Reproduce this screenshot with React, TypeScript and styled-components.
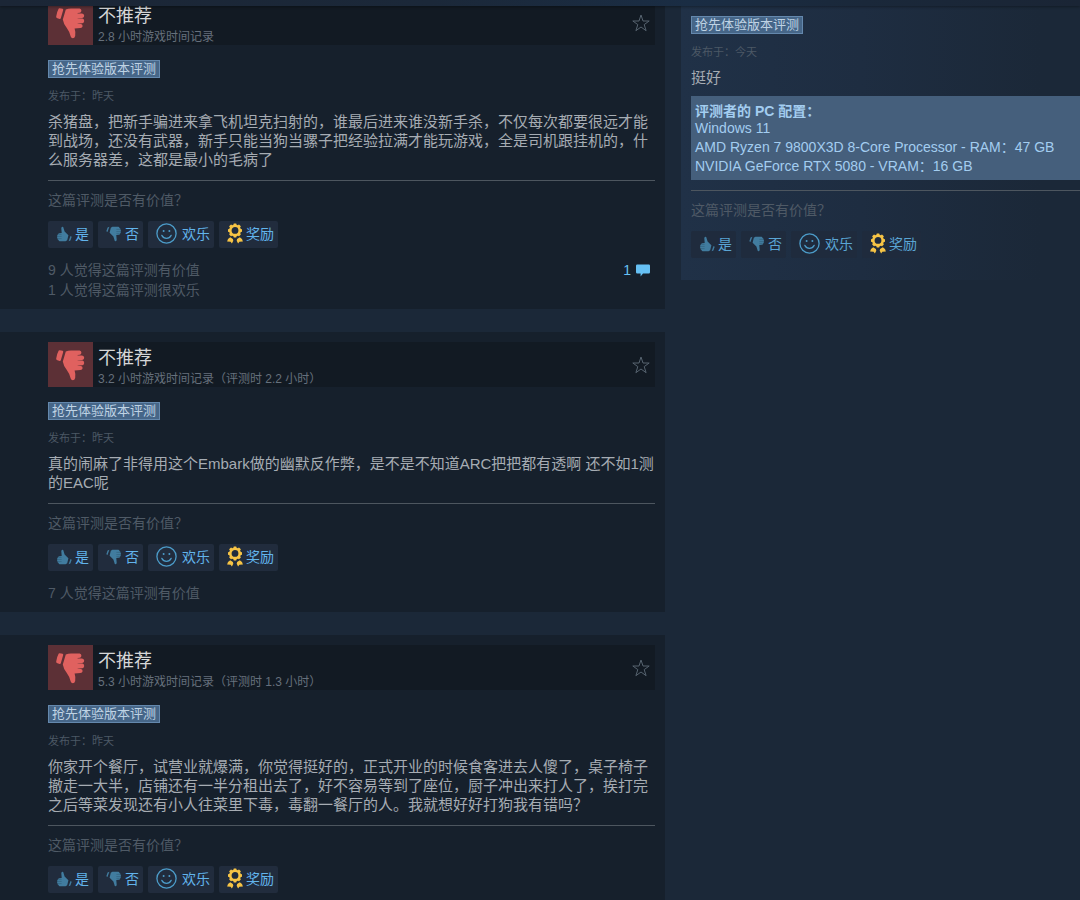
import React from "react";
import styled, { createGlobalStyle } from "styled-components";

const GlobalStyle = createGlobalStyle`
  * { box-sizing: border-box; }
  body {
    margin: 0;
    background: #1b2838;
    color: #acb2b8;
    font-family: "Liberation Sans", "Noto Sans CJK SC", sans-serif;
    font-size: 14px;
    line-height: 20px;
  }
  h2, h3, p, ul { margin: 0; padding: 0; font-weight: normal; }
`;

const Page = styled.main`
  position: relative;
  height: 100vh;
  overflow: hidden;
`;

const TopStrip = styled.div`
  position: absolute;
  inset: 0 0 auto 0;
  height: 6px;
  background: linear-gradient(90deg, #1b2636 0%, #1b2839 40%, #1a2d44 64%, #1a283a 80%, #1a2535 100%);
  box-shadow: 0 1px 3px rgba(0, 0, 0, 0.35);
`;

const Columns = styled.div`
  display: grid;
  grid-template-columns: minmax(0, 5fr) minmax(0, 3fr);
  gap: 16px;
  align-items: start;
`;

const ReviewList = styled.div`
  display: flex;
  flex-direction: column;
  gap: 23px;
`;

const Card = styled.article`
  padding: 10px 10px 9px 48px;
  background: #16202c;
  &:first-child { padding-top: 0; }
`;

const CardHeader = styled.header`
  display: flex;
  align-items: center;
  height: 45px;
  padding-right: 5px;
  background: #121a23;
`;

const RatingTile = styled.div`
  width: 45px;
  height: 45px;
  background: #5c3036;
  color: #e0615f;
`;

const HeaderText = styled.div`
  flex: 1;
  padding: 4px 5px 0;
`;

const Verdict = styled.h2`
  color: #d6d7d8;
  font-size: 18px;
  line-height: 24px;
`;

const Hours = styled.p`
  color: #66707c;
  font-size: 12px;
  line-height: 18px;
`;

const StarButton = styled.button`
  display: flex;
  padding: 0;
  border: 0;
  background: none;
  color: #56636f;
  cursor: pointer;
`;

const Badge = styled.div`
  display: table;
  height: 18px;
  padding: 0 3px;
  border: 1px solid #6488ad;
  background: #466688;
  color: #bfd3e4;
  font-size: 13px;
  line-height: 16px;
`;

const BadgeRow = styled.div`
  margin-top: 15px;
`;

const Posted = styled.p`
  margin-top: 11px;
  color: #4c5865;
  font-size: 11px;
  line-height: 14px;
`;

const Body = styled.p`
  margin-top: 9px;
  color: #a6acb3;
  font-size: 15px;
  line-height: 19px;
`;

const Footer = styled.footer<{ $gap: number }>`
  margin-top: ${(p) => p.$gap}px;
  padding-top: 9px;
  border-top: 1px solid #4d565f;
  color: #4f5a66;
`;

const Actions = styled.div`
  display: flex;
  gap: 5px;
  margin-top: 11px;
`;

const ActionButton = styled.button<{ $gap?: number; $dim?: boolean }>`
  display: flex;
  align-items: center;
  gap: ${(p) => p.$gap ?? 3}px;
  height: 27px;
  padding: 0 4px 2px 8px;
  border: 0;
  border-radius: 2px;
  background: ${(p) => (p.$dim ? "#1f2b3d" : "#212c3d")};
  color: ${(p) => (p.$dim ? "#5aa5d4" : "#62b4ec")};
  font: inherit;
  cursor: pointer;
`;

const StatsRow = styled.div`
  display: flex;
  justify-content: space-between;
  align-items: flex-start;
  margin-top: 12px;
`;

const CommentLink = styled.a`
  display: flex;
  align-items: center;
  gap: 5px;
  padding-right: 5px;
  color: #66c0f4;
  text-decoration: none;
`;

const SidePanel = styled.aside`
  height: 280px;
  padding: 16px 0 0 10px;
  background: linear-gradient(90deg, #203147 0%, #1e2d41 45%, #1b2838 90%);
`;

const Specs = styled.section`
  margin-top: 9px;
  padding: 7px 4px 4px;
  background: #455f7c;
  color: #a3cdf0;
  line-height: 19px;
`;

const SpecsTitle = styled.h3`
  font-size: 14px;
  font-weight: bold;
  line-height: 16px;
`;

function ThumbShape() {
  return (
    <g fill="currentColor">
      <path d="M11.6 8.2 14.6 8.8Q15.4 9 15.2 9.9L12.8 18.3Q12.5 19.2 11.6 19L8.8 18Q8 17.6 8.2 16.6 8.8 12 10.6 8.8 10.9 8.1 11.6 8.2Z" />
      <path d="M17.8 9.4Q20 8.4 23 8.4L31.6 8.5Q33.4 8.8 33.4 10.6 33.4 12.4 32 12.7L29.6 13V13.4H34Q36.2 13.8 36.2 15.8 36.2 17.8 34.2 18L29.6 18.2V18.6H34.4Q36.2 19 36.2 21 36.2 23 34.4 23.2L29.6 23.4V23.8L33 24Q34.8 24.6 34.6 26.3 34.4 27.9 32.4 28L26.6 28.4Q27.8 32 27.2 36 26.6 38.2 24.8 38.2 23.2 38.2 22.7 36.6 21.6 31.6 18.8 28 15.6 24.4 14.8 19.6Z" />
    </g>
  );
}

function SmallThumb({ up }: { up?: boolean }) {
  const cuff = "M3.4.8 1.6 1.6.3 5.2 1.5 6Z";
  const hand =
    "M4.8 1.8 6.4.7H12.4Q13.6.9 13.4 2 14.7 2.2 14.4 3.6 15.4 4.2 14.6 5.5 15.2 6.6 14.2 7.4 14 8.7 12.8 8.8L10.3 9.1 10.7 14Q10.2 15.6 8.8 15.1L7.4 10.6 3.6 6.8Z";
  return (
    <svg width="16" height="16" viewBox="0 0 16 16" fill="#417c9f" aria-hidden="true">
      <g transform={up ? "rotate(180 8 8)" : undefined}>
        <path d={cuff} />
        <path d={hand} />
        <path d="M10.4 3.4H14M10.4 5.5H14.2M10.4 7.4H13.8" stroke="#2f5873" strokeWidth=".5" />
      </g>
    </svg>
  );
}

function Smiley() {
  return (
    <svg width="21" height="21" viewBox="0 0 21 21" fill="none" stroke="#4c9cc9" aria-hidden="true">
      <circle cx="10.5" cy="10.5" r="9.6" strokeWidth="1.3" />
      <path d="M5.8 12.4Q7.4 15.4 10.5 15.4T15.2 12.4" strokeWidth="1.2" strokeLinecap="round" />
      <circle cx="7.6" cy="8" r="1" fill="#4c9cc9" stroke="none" />
      <circle cx="13.4" cy="8" r="1" fill="#4c9cc9" stroke="none" />
    </svg>
  );
}

function Award() {
  const teeth = [0, 45, 90, 135, 180, 225, 270, 315];
  return (
    <svg width="16" height="21" viewBox="0 0 16 21" fill="#f7c445" aria-hidden="true">
      <circle cx="8" cy="7.4" r="4.7" fill="none" stroke="#f7c445" strokeWidth="2.6" />
      {teeth.map((a) => (
        <rect key={a} x="6.5" y=".4" width="3" height="2.4" rx=".6" transform={`rotate(${a} 8 7.4)`} />
      ))}
      <path d="M3.2 14.3 5.9 15.9 6.3 17.8 4.9 20.6 3.6 18.8 .1 18.4 1 16Z" />
      <path d="M12.8 14.3 10.1 15.9 9.7 17.8 11.1 20.6 12.4 18.8 15.9 18.4 15 16Z" />
    </svg>
  );
}

function VoteFooter({ gap, dim, children }: { gap: number; dim?: boolean; children?: React.ReactNode }) {
  return (
    <Footer $gap={gap}>
      <p>这篇评测是否有价值？</p>
      <Actions>
        <ActionButton type="button" $dim={dim}><SmallThumb up />是</ActionButton>
        <ActionButton type="button" $dim={dim}><SmallThumb />否</ActionButton>
        <ActionButton type="button" $dim={dim} $gap={5}><Smiley />欢乐</ActionButton>
        <ActionButton type="button" $dim={dim}><Award />奖励</ActionButton>
      </Actions>
      {children}
    </Footer>
  );
}

interface Review {
  hours: string;
  body: string;
  stats: string[];
  comments?: number;
}

const reviews: Review[] = [
  {
    hours: "2.8 小时游戏时间记录",
    body: "杀猪盘，把新手骗进来拿飞机坦克扫射的，谁最后进来谁没新手杀，不仅每次都要很远才能到战场，还没有武器，新手只能当狗当骡子把经验拉满才能玩游戏，全是司机跟挂机的，什么服务器差，这都是最小的毛病了",
    stats: ["9 人觉得这篇评测有价值", "1 人觉得这篇评测很欢乐"],
    comments: 1,
  },
  {
    hours: "3.2 小时游戏时间记录（评测时 2.2 小时）",
    body: "真的闹麻了非得用这个Embark做的幽默反作弊，是不是不知道ARC把把都有透啊 还不如1测的EAC呢",
    stats: ["7 人觉得这篇评测有价值"],
  },
  {
    hours: "5.3 小时游戏时间记录（评测时 1.3 小时）",
    body: "你家开个餐厅，试营业就爆满，你觉得挺好的，正式开业的时候食客进去人傻了，桌子椅子撤走一大半，店铺还有一半分租出去了，好不容易等到了座位，厨子冲出来打人了，挨打完之后等菜发现还有小人往菜里下毒，毒翻一餐厅的人。我就想好好打狗我有错吗？",
    stats: [],
  },
];

function ReviewCard({ review }: { review: Review }) {
  return (
    <Card>
      <CardHeader>
        <RatingTile>
          <svg width="45" height="45" viewBox="0 0 45 45" aria-hidden="true"><ThumbShape /></svg>
        </RatingTile>
        <HeaderText>
          <Verdict>不推荐</Verdict>
          <Hours>{review.hours}</Hours>
        </HeaderText>
        <StarButton type="button" aria-label="收藏">
          <svg width="18" height="18" viewBox="0 0 18 18" fill="none" stroke="currentColor" aria-hidden="true">
            <path d="M9 1 11 7H17.2L12.2 10.6 14.1 16.7 9 13 3.9 16.7 5.8 10.6.8 7H7Z" />
          </svg>
        </StarButton>
      </CardHeader>
      <BadgeRow><Badge>抢先体验版本评测</Badge></BadgeRow>
      <Posted>发布于：昨天</Posted>
      <Body>{review.body}</Body>
      <VoteFooter gap={11}>
        <StatsRow>
          <div>
            {review.stats.map((s) => <p key={s}>{s}</p>)}
          </div>
          {review.comments !== undefined && (
            <CommentLink href="#comments">
              {review.comments}
              <svg width="14" height="13" viewBox="0 0 14 13" fill="currentColor" aria-hidden="true">
                <path d="M1.2.5H12.8Q14 .5 14 1.7V8.3Q14 9.5 12.8 9.5H7L4.6 12.5V9.5H1.2Q0 9.5 0 8.3V1.7Q0 .5 1.2.5Z" />
              </svg>
            </CommentLink>
          )}
        </StatsRow>
      </VoteFooter>
    </Card>
  );
}

export default function App() {
  return (
    <>
      <GlobalStyle />
      <Page>
        <Columns>
          <ReviewList>
            {reviews.map((r) => <ReviewCard key={r.hours} review={r} />)}
          </ReviewList>
          <SidePanel>
            <Badge>抢先体验版本评测</Badge>
            <Posted>发布于：今天</Posted>
            <Body>挺好</Body>
            <Specs>
              <SpecsTitle>评测者的 PC 配置：</SpecsTitle>
              <p>Windows 11</p>
              <p>AMD Ryzen 7 9800X3D 8-Core Processor - RAM：47 GB</p>
              <p>NVIDIA GeForce RTX 5080 - VRAM：16 GB</p>
            </Specs>
            <VoteFooter gap={10} dim />
          </SidePanel>
        </Columns>
        <TopStrip />
      </Page>
    </>
  );
}
